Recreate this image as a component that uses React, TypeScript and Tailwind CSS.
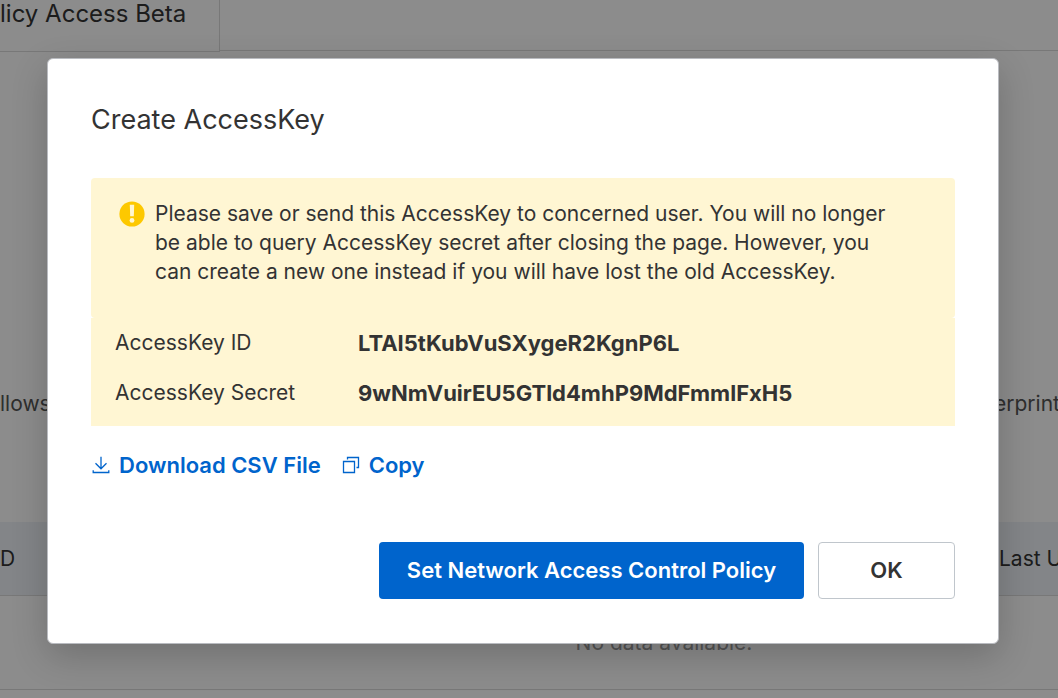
import React from "react";

function WarningIcon() {
  return (
    <svg viewBox="0 0 26 26" className="mt-[2px] size-[26px] shrink-0" aria-hidden="true">
      <circle cx="13" cy="13" r="12.6" fill="#fdc800" />
      <path d="M10.8 3.8h4.4l-.4 11.4h-3.6z" fill="#fff6d3" />
      <circle cx="13" cy="19.4" r="2.4" fill="#fff6d3" />
    </svg>
  );
}

function DownloadIcon() {
  return (
    <svg viewBox="0 0 18 18" className="size-[18px]" fill="none" stroke="currentColor" strokeWidth="1.3" aria-hidden="true">
      <path d="M9 .8v12M3.5 7.3 9 12.8l5.5-5.5M1.2 14.3v2.2h15.6v-2.2" />
    </svg>
  );
}

function CopyIcon() {
  return (
    <svg viewBox="0 0 18 18" className="size-[18px]" fill="none" stroke="currentColor" strokeWidth="1.3" aria-hidden="true">
      <path d="M1.5 5.5h11v11h-11zM5.5 3.5v-2h11v10h-2" />
    </svg>
  );
}

const credentials = [
  { label: "AccessKey ID", value: "LTAI5tKubVuSXygeR2KgnP6L" },
  { label: "AccessKey Secret", value: "9wNmVuirEU5GTld4mhP9MdFmmlFxH5" },
];

function PageBehind() {
  return (
    <div className="text-[21px] leading-7 text-[#333]">
      <nav className="flex items-start">
        <a href="#policy" className="h-[52px] w-[220px] border-r border-b border-[#dadada] text-2xl leading-7">
          licy Access Beta
        </a>
        <div className="h-[51px] flex-1 border-b border-[#dadada]" />
      </nav>
      <div className="flex justify-between pt-[338px] text-[#555]">
        <span>llows</span>
        <span className="w-16 whitespace-nowrap">erprint</span>
      </div>
      <table className="mt-[104px] w-full table-fixed">
        <thead>
          <tr className="h-[73px] border-b border-[#dadada] bg-[#eff3f8] text-left">
            <th className="p-0 pt-[2px] font-normal">D</th>
            <th className="w-[59px] p-0 pt-[2px] font-normal whitespace-nowrap">Last U</th>
          </tr>
        </thead>
        <tbody>
          <tr className="h-[94px] border-b border-[#dadada]">
            <td colSpan={2} className="pt-[2px] pl-[270px] text-center text-[#999]">
              No data available.
            </td>
          </tr>
        </tbody>
      </table>
    </div>
  );
}

export default function App() {
  return (
    <div className="relative h-screen overflow-hidden bg-white font-['Inter',sans-serif]">
      <PageBehind />
      <div className="absolute inset-0 bg-black/45 pt-[58px] pr-[59px] pl-[47px]">
        <section
          role="dialog"
          aria-modal="true"
          aria-labelledby="dialog-title"
          className="rounded-md border border-[#b9bbc0] bg-white px-[43px] pt-[43px] pb-11 text-[21px] text-[#333] shadow-[0_12px_36px_rgba(0,0,0,0.2)]"
        >
          <h1 id="dialog-title" className="text-[27px] leading-9">
            Create AccessKey
          </h1>

          <div className="mt-10 flex gap-[10px] rounded bg-[#fff6d3] px-7 pt-[21px] pb-8">
            <WarningIcon />
            <p className="leading-[29px]">
              Please save or send this AccessKey to concerned user. You will no longer
              <br />
              be able to query AccessKey secret after closing the page. However, you
              <br />
              can create a new one instead if you will have lost the old AccessKey.
            </p>
          </div>
          <dl className="bg-[#fff6d3] px-6 pb-2">
            {credentials.map(({ label, value }) => (
              <div key={label} className="flex h-[50px] items-center">
                <dt className="w-[243px]">{label}</dt>
                <dd className="text-[22px] leading-8 font-bold">{value}</dd>
              </div>
            ))}
          </dl>

          <div className="mt-[23px] flex gap-[21px] text-[22px] font-semibold text-[#0064cc]">
            <button type="button" className="flex h-8 items-center gap-[9px] pl-px">
              <DownloadIcon />
              Download CSV File
            </button>
            <button type="button" className="flex h-8 items-center gap-[9px]">
              <CopyIcon />
              Copy
            </button>
          </div>

          <div className="mt-[61px] flex justify-end gap-[14px] text-[22px] font-semibold">
            <button type="button" className="h-[57px] w-[425px] rounded bg-[#0064cc] text-white">
              Set Network Access Control Policy
            </button>
            <button type="button" className="h-[57px] w-[137px] rounded border border-[#c0c6cc]">
              OK
            </button>
          </div>
        </section>
      </div>
    </div>
  );
}
